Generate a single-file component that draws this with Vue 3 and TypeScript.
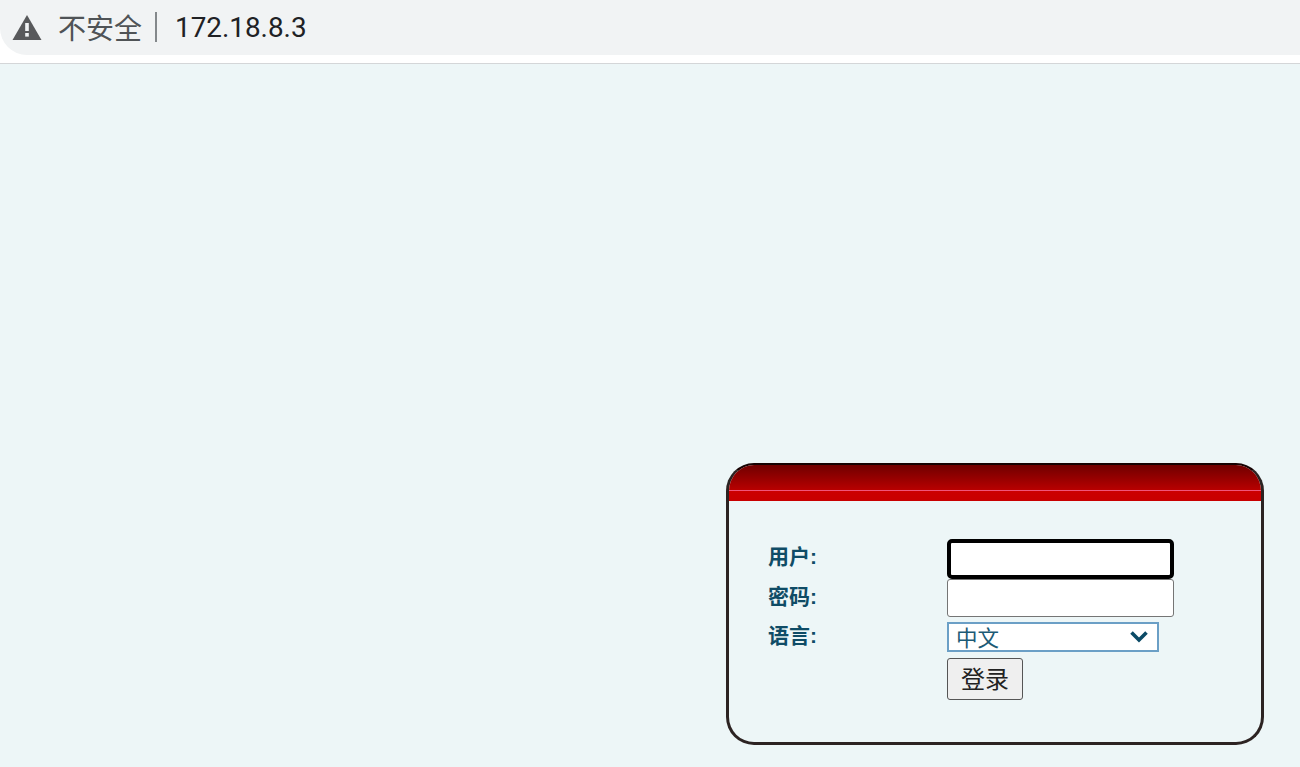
<script setup lang="ts">
const labels: string[] = ['用户:', '密码:', '语言:']
</script>

<template>
  <div class="page">
    <header class="chrome">
      <div class="omnibox">
        <svg class="warn" viewBox="0 0 30 26" width="30" height="26" aria-hidden="true">
          <path d="M15 1 L29.5 26 H0.5 Z" fill="#58595b" />
          <rect x="13.2" y="9" width="3.6" height="8" fill="#f1f3f4" />
          <rect x="13.2" y="19" width="3.6" height="3.6" fill="#f1f3f4" />
        </svg>
        <span class="insecure">不安全</span>
        <span class="sep"></span>
        <span class="url">172.18.8.3</span>
      </div>
    </header>
    <main class="content">
      <section class="panel">
        <div class="panel-head"></div>
        <form class="form" @submit.prevent>
          <div class="labels">
            <label v-for="l in labels" :key="l" class="label">{{ l }}</label>
          </div>
          <div class="fields">
            <input class="input focused" type="text" />
            <input class="input" type="password" />
            <div class="select">
              <span>中文</span>
              <svg viewBox="0 0 20 14" width="20" height="14" aria-hidden="true">
                <path d="M2.5 2.5 L10 10 L17.5 2.5" fill="none" stroke="#0b4a66" stroke-width="3.6" />
              </svg>
            </div>
            <button class="btn" type="submit">登录</button>
          </div>
        </form>
      </section>
    </main>
  </div>
</template>

<style scoped>
.page {
  width: 1300px;
  height: 767px;
  display: flex;
  flex-direction: column;
  background: #edf6f7;
  overflow: hidden;
  font-family: "Liberation Sans", "Noto Sans CJK SC", sans-serif;
}
.chrome {
  height: 64px;
  flex: none;
  box-sizing: border-box;
  background: #fff;
  border-bottom: 1px solid #d4d6d8;
}
.omnibox {
  height: 55px;
  display: flex;
  align-items: center;
  padding-left: 12px;
  padding-bottom: 1px;
  box-sizing: border-box;
  background: #f1f3f4;
  border-bottom-left-radius: 27px;
}
.warn {
  flex: none;
}
.insecure {
  margin-left: 16px;
  font-size: 28px;
  line-height: 1;
  color: #4f5356;
  width: 84px;
  white-space: nowrap;
  font-family: "Noto Sans CJK SC", sans-serif;
}
.sep {
  width: 2px;
  height: 30px;
  margin-left: 13px;
  background: #84888b;
}
.url {
  margin-left: 18px;
  font-size: 27.85px;
  color: #202124;
  font-family: "Roboto", "Liberation Sans", sans-serif;
}
.content {
  flex: 1;
  padding: 399px 0 0 726px;
}
.panel {
  width: 538px;
  height: 282px;
  box-sizing: border-box;
  border: 3px solid #2c2322;
  border-top: 2px solid #170303;
  border-radius: 28px;
  overflow: hidden;
  background: #edf6f7;
}
.panel-head {
  height: 36px;
  background:
    linear-gradient(#f0557a, #f0557a) 0 25px / 100% 1px no-repeat,
    linear-gradient(#cc0000, #c80000) 0 26px / 100% 10px no-repeat,
    linear-gradient(#700000, #b80000) 0 0 / 100% 25px no-repeat;
}
.form {
  display: flex;
  padding: 38px 0 0 39px;
}
.labels {
  width: 179px;
  display: flex;
  flex-direction: column;
  padding-top: 5px;
}
.label {
  height: 39.5px;
  font-size: 21px;
  line-height: 26px;
  font-weight: 700;
  color: #0f4c66;
}
.fields {
  display: flex;
  flex-direction: column;
  align-items: flex-start;
}
.input {
  display: block;
  width: 227px;
  height: 38px;
  box-sizing: border-box;
  border: 1px solid #757575;
  border-radius: 3px;
  background: #fff;
  padding: 0;
  margin: 0;
}
.input.focused {
  height: 40px;
  border: 4px solid #000;
  border-radius: 5px;
}
.select {
  margin-top: 5px;
  width: 212px;
  height: 30px;
  box-sizing: border-box;
  border: 2px solid #6b9fc6;
  background: #fff;
  display: flex;
  align-items: center;
  justify-content: space-between;
  padding: 0 8px 2px 7px;
  font-size: 21.5px;
  color: #1c5a75;
}
.select svg {
  margin-top: 2px;
}
.btn {
  margin-top: 6px;
  width: 76px;
  height: 42px;
  box-sizing: border-box;
  border: 1px solid #555;
  border-radius: 3px;
  background: #efefef;
  color: #222;
  font-size: 24px;
  font-family: inherit;
  padding: 0 0 4px;
}
</style>
